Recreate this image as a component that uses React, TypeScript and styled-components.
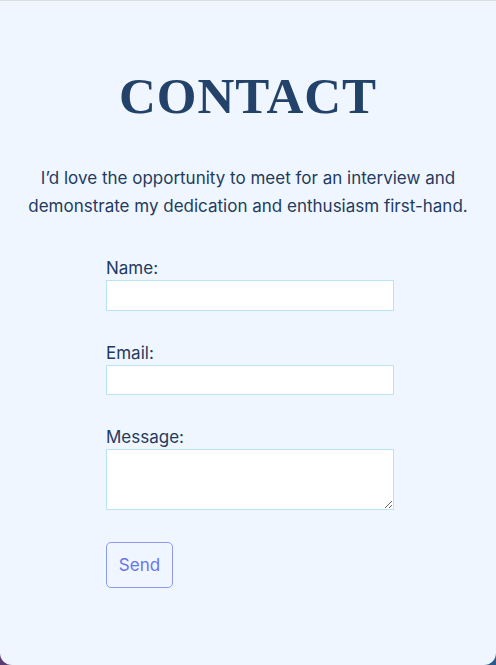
import React from "react";
import styled, { createGlobalStyle } from "styled-components";

const Global = createGlobalStyle`
  html, body {
    margin: 0;
    padding: 0;
    background: linear-gradient(90deg, #5a3d72 0%, #2d5a8c 100%);
  }
  * { box-sizing: border-box; }
`;

const Panel = styled.section`
  height: 665px;
  background: #eff6ff;
  border-top: 1px solid #dadde2;
  border-radius: 0 0 12px 12px;
  padding: 65px 0 0;
  display: flex;
  flex-direction: column;
  align-items: center;
  font-family: Inter, "Liberation Sans", sans-serif;
`;

const Title = styled.h1`
  margin: 0;
  font-family: "Liberation Serif", Georgia, serif;
  font-weight: 700;
  font-size: 51px;
  line-height: 61px;
  color: #22426a;
  letter-spacing: 1px;
`;

const Intro = styled.p`
  margin: 37px 0 0;
  font-size: 17px;
  line-height: 28px;
  color: #1f3b5e;
  text-align: center;
  max-width: 480px;
`;

const Form = styled.form`
  align-self: flex-start;
  margin: 36px 0 0 106px;
  width: 288px;
  display: flex;
  flex-direction: column;
  gap: 30px;
`;

const Field = styled.div`
  display: flex;
  flex-direction: column;
`;

const Label = styled.label`
  font-size: 17px;
  line-height: 24px;
  color: #1f3b5e;
`;

const Input = styled.input<{ $h?: number }>`
  width: 100%;
  height: ${(p) => p.$h ?? 31}px;
  margin: 0;
  background: #fff;
  border: 1px solid #b9e3f7;
  border-radius: 0;
  outline: none;
  font: inherit;
`;

const TextArea = styled.textarea`
  width: 100%;
  height: 61px;
  margin: 0;
  background: #fff;
  border: 1px solid #b9e3f7;
  border-radius: 0;
  outline: none;
  font: inherit;
  display: block;
`;

const SendButton = styled.button`
  align-self: flex-start;
  margin-top: 2px;
  width: 67px;
  height: 46px;
  background: transparent;
  border: 1px solid #8c9af5;
  border-radius: 5px;
  color: #6a73ee;
  font-family: Inter, "Liberation Sans", sans-serif;
  font-size: 17px;
  cursor: pointer;
`;

export default function App() {
  return (
    <>
      <Global />
      <Panel>
        <Title>CONTACT</Title>
        <Intro>
          I’d love the opportunity to meet for an interview and
          <br />
          demonstrate my dedication and enthusiasm first-hand.
        </Intro>
        <Form onSubmit={(e) => e.preventDefault()}>
          <Field>
            <Label htmlFor="name">Name:</Label>
            <Input id="name" type="text" />
          </Field>
          <Field>
            <Label htmlFor="email">Email:</Label>
            <Input id="email" type="email" $h={30} />
          </Field>
          <Field>
            <Label htmlFor="message">Message:</Label>
            <TextArea id="message" />
          </Field>
          <SendButton type="submit">Send</SendButton>
        </Form>
      </Panel>
    </>
  );
}
